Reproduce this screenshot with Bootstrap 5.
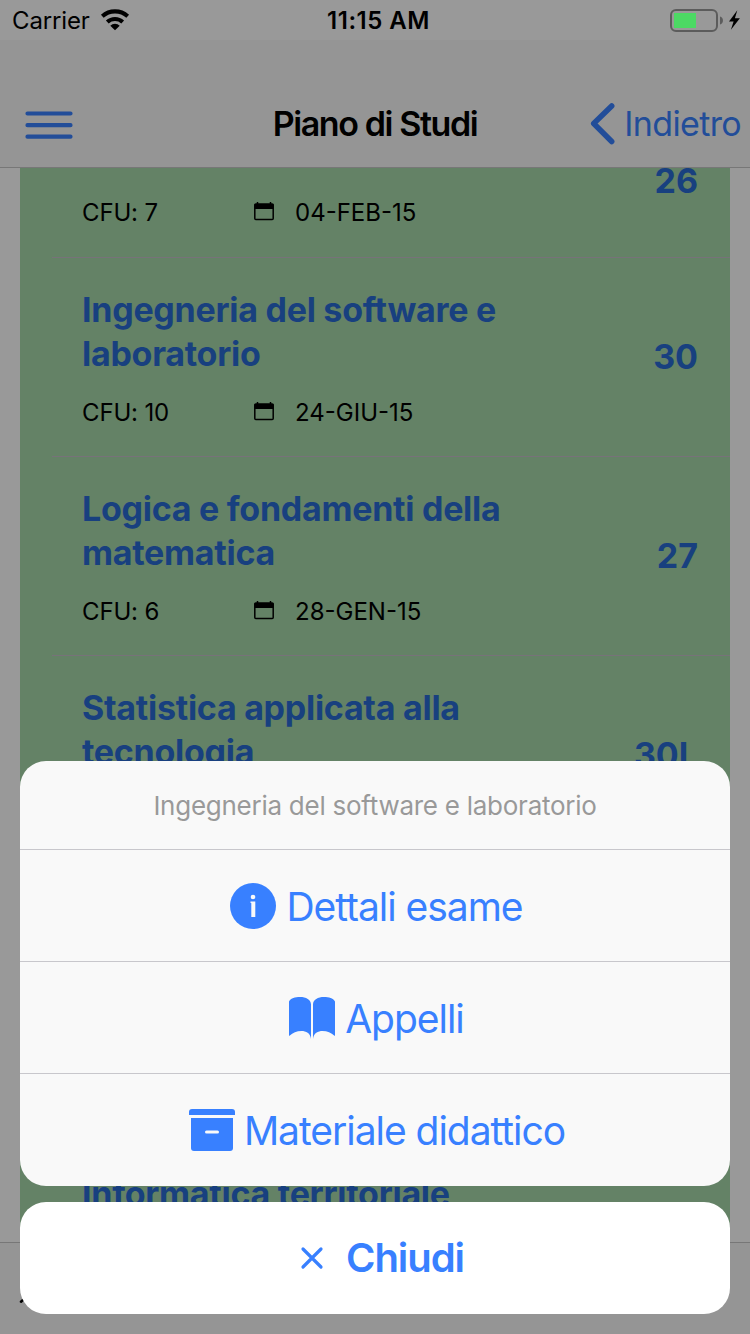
<!DOCTYPE html>
<html lang="it">
<head>
<meta charset="utf-8">
<meta name="viewport" content="width=device-width, initial-scale=1">
<title>Piano di Studi</title>
<link href="https://cdn.jsdelivr.net/npm/bootstrap@5.3.0/dist/css/bootstrap.min.css" rel="stylesheet">
<style>
  body { font-family: Inter, "Liberation Sans", sans-serif; background: #999; color: #000; }
  .app { height: 1334px; }
  .status { height: 40px; font-size: 24px; line-height: 40px; }
  .status .side { flex: 1 1 0; }
  .status span { padding-top: 1px; }
  .carrier { letter-spacing: -.15px; }
  .clock { font-weight: 600; letter-spacing: .5px; margin-left: -1px; }
  .topbar { height: 128px; padding-top: 42px; background: #959595; border-bottom: 1px solid #777; }
  .topbar .side { flex: 1 1 0; }
  .topbar h1 { font-size: 34px; font-weight: 600; letter-spacing: -1.4px; line-height: 84px; }
  .back { color: #224d99; font-size: 34px; letter-spacing: -.65px; line-height: 80px; }
  .back span { margin-right: 9px; margin-top: -2px; }
  .exams { margin: 0 20px; background: #648266; height: 1074px; }
  .exam { margin-left: 32px; padding: 30px 32px 0 30px; height: 199px; border-bottom: 1px solid #777279; flex: none; }
  .exam.partial { height: 90px; padding-top: 0; }
  .exam.tall { height: 287px; }
  .exam h2 { font-size: 34px; font-weight: 700; line-height: 44px; letter-spacing: -.27px; color: #18407f; width: 450px; margin: 0 0 21px; }
  .grade { font-size: 34px; font-weight: 700; line-height: 44px; color: #18407f; padding-top: 47px; }
  .partial .grade { padding: 0; margin-top: -9px; }
  .meta { font-size: 24px; line-height: 30px; }
  .meta span { padding-top: 1px; }
  .meta .cfu { width: 171px; letter-spacing: -.15px; }
  .meta svg { margin-right: 20px; margin-top: -3px; }
  .tabs { height: 92px; background: #959595; border-top: 1px solid #777; }
  .tabs svg { margin: 56px 0 0 19px; }
  .sheet { left: 20px; right: 20px; bottom: 20px; }
  .panel { border-radius: 26px; overflow: hidden; background: #f9f9f9; }
  .panel-title { height: 88px; font-size: 26px; line-height: 90px; color: #999; letter-spacing: -.26px; }
  .action { height: 112px; font-size: 39px; color: #3880ff; border: 0; border-top: 1px solid #c8c7cc; background: none; padding: 0; letter-spacing: -1.03px; }
  .action:last-child { height: 113px; padding-bottom: 1px; }
  .action svg { margin: 0 10px 0 3px; flex: none; }
  .action:last-child svg { margin-right: 9px; margin-left: 4px; }
  .action span { padding-top: 4px; }
  .cancel { height: 112px; border-radius: 26px; background: #fff; color: #3880ff; font-size: 40px; font-weight: 600; border: 0; letter-spacing: -1.1px; }
  .cancel svg { margin: 0 22px 0 14px; }
</style>
</head>
<body>
<div class="app position-relative d-flex flex-column overflow-hidden">
  <div class="status d-flex">
    <div class="side d-flex align-items-center ps-2">
      <span class="carrier ms-1">Carrier</span>
      <svg class="ms-2" width="34" height="24" viewBox="0 0 34 24">
        <g fill="none" stroke="#000" stroke-width="4.1"><path d="M4.300 8.200a19 19 0 0 1 25.400 0"/><path d="M9.300 14a11.400 11.400 0 0 1 15.400 0"/></g>
        <path d="M17 22.200l-4.700-4.500a6.600 6.600 0 0 1 9.400 0z"/>
      </svg>
    </div>
    <span class="clock">11:15 AM</span>
    <div class="side d-flex align-items-center justify-content-end">
      <svg width="80" height="40" viewBox="0 0 80 40">
        <rect x="1" y="10" width="46" height="21" rx="5" fill="none" stroke="#5c5c5c" stroke-width="2"/>
        <rect x="4" y="13" width="22" height="15" fill="#4cd964"/>
        <path d="M50 16.500a4.200 4.200 0 0 1 0 8z" fill="#5c5c5c"/>
        <path d="M67.300 10.300l-8.300 11.200h4.600l-2.700 8.200 9-11.500h-5z"/>
      </svg>
    </div>
  </div>
  <header class="topbar d-flex flex-shrink-0">
    <div class="side d-flex align-items-center">
      <svg width="80" height="40" viewBox="0 0 80 40" fill="none" stroke="#224d99" stroke-width="4.200" stroke-linecap="round"><path d="M27.500 8.500h43M27.500 20.200h43M27.500 31.700h43"/></svg>
    </div>
    <h1 class="m-0">Piano di Studi</h1>
    <div class="side d-flex align-items-center justify-content-end back">
      <svg class="me-2" width="26" height="44" viewBox="0 0 26 44" fill="none" stroke="#224d99" stroke-width="5.500" stroke-linecap="round" stroke-linejoin="round"><path d="M21.700 3L3.700 20.500l18 18"/></svg>
      <span>Indietro</span>
    </div>
  </header>
  <main class="exams d-flex flex-column overflow-hidden flex-shrink-0">
    <section class="exam partial d-flex">
      <div class="meta d-flex align-items-center flex-grow-1">
        <span class="cfu">CFU: 7</span>
        <svg width="22" height="20" viewBox="0 0 22 20"><path d="M4.500 1v3M17.500 1v3" stroke="#000" stroke-width="1.500"/><rect x="1.800" y="3" width="18.400" height="15.500" rx="1" fill="none" stroke="#000" stroke-width="1.500"/><path d="M1.500 3h19v5h-19z"/></svg>
        <span>04-FEB-15</span>
      </div>
      <div class="grade">26</div>
    </section>
    <section class="exam d-flex">
      <div class="flex-grow-1">
        <h2>Ingegneria del software e laboratorio</h2>
        <div class="meta d-flex align-items-center">
          <span class="cfu">CFU: 10</span>
          <svg width="22" height="20" viewBox="0 0 22 20"><path d="M4.500 1v3M17.500 1v3" stroke="#000" stroke-width="1.500"/><rect x="1.800" y="3" width="18.400" height="15.500" rx="1" fill="none" stroke="#000" stroke-width="1.500"/><path d="M1.500 3h19v5h-19z"/></svg>
          <span>24-GIU-15</span>
        </div>
      </div>
      <div class="grade">30</div>
    </section>
    <section class="exam d-flex">
      <div class="flex-grow-1">
        <h2>Logica e fondamenti della matematica</h2>
        <div class="meta d-flex align-items-center">
          <span class="cfu">CFU: 6</span>
          <svg width="22" height="20" viewBox="0 0 22 20"><path d="M4.500 1v3M17.500 1v3" stroke="#000" stroke-width="1.500"/><rect x="1.800" y="3" width="18.400" height="15.500" rx="1" fill="none" stroke="#000" stroke-width="1.500"/><path d="M1.500 3h19v5h-19z"/></svg>
          <span>28-GEN-15</span>
        </div>
      </div>
      <div class="grade">27</div>
    </section>
    <section class="exam tall d-flex">
      <div class="flex-grow-1"><h2>Statistica applicata alla tecnologia</h2></div>
      <div class="grade">30L</div>
    </section>
    <section class="exam"></section>
    <section class="exam"><h2>Informatica territoriale</h2></section>
  </main>
  <footer class="tabs flex-shrink-0">
    <svg class="d-block" width="12" height="6" viewBox="0 0 12 6" stroke="#000" stroke-width="2.500" stroke-linecap="round"><path d="M2 2.700L5 0"/></svg>
  </footer>

  <div class="sheet position-absolute d-flex flex-column gap-3">
    <div class="panel d-flex flex-column text-center">
      <div class="panel-title">Ingegneria del software e laboratorio</div>
      <button class="action d-flex align-items-center justify-content-center">
        <svg width="46" height="46" viewBox="0 0 46 46"><circle cx="23" cy="23" r="23" fill="#3880ff"/><circle cx="23" cy="14" r="2.300" fill="#f9f9f9"/><path d="M20.500 18.500h4.800V34h-4V20h-.8z" fill="#f9f9f9"/></svg>
        <span>Dettali esame</span>
      </button>
      <button class="action d-flex align-items-center justify-content-center">
        <svg width="46" height="46" viewBox="0 0 46 46" fill="#3880ff"><path d="M0 6.500C2 3 6 2 11 2c6 0 11 2.500 11 7.500V44c-.6-6-5-8-9.500-8-5 0-8.500 1.500-12 4.800H0zM46 6.500C44 3 40 2 35 2c-6 0-11 2.500-11 7.500V44c.6-6 5-8 9.500-8 5 0 8.500 1.500 12 4.800h.5z"/></svg>
        <span>Appelli</span>
      </button>
      <button class="action d-flex align-items-center justify-content-center">
        <svg width="46" height="46" viewBox="0 0 46 46" fill="#3880ff"><path d="M0 8V5q0-3 3-3h40q3 0 3 3v3z"/><path d="M2 11h42v30q0 3-3 3H5q-3 0-3-3z"/><path d="M17.500 25h11" stroke="#f9f9f9" stroke-width="3" stroke-linecap="round"/></svg>
        <span>Materiale didattico</span>
      </button>
    </div>
    <button class="cancel d-flex align-items-center justify-content-center">
      <svg width="24" height="24" viewBox="-1 -1 24 24" fill="none" stroke="#3880ff" stroke-width="3.200" stroke-linecap="round"><path d="M2 2l18 18M20 2L2 20"/></svg>
      <span>Chiudi</span>
    </button>
  </div>
</div>
<script src="https://cdn.jsdelivr.net/npm/bootstrap@5.3.0/dist/js/bootstrap.bundle.min.js"></script>
</body>
</html>
